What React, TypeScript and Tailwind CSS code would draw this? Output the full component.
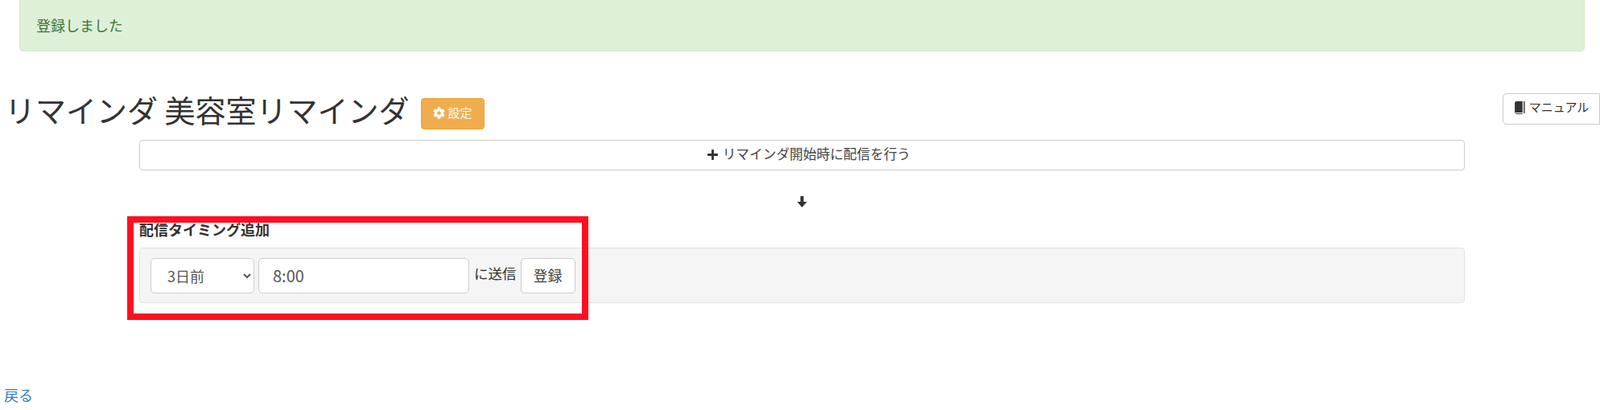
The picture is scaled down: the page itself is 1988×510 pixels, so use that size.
import { FaCog, FaPlus } from 'react-icons/fa'

const FONT = "font-['Noto_Sans_CJK_JP','Noto_Sans',sans-serif]"

const BookIcon = () => (
  <svg viewBox="0 0 14 16" className="h-[17px] w-[15px]" fill="currentColor">
    <path d="M1 3 Q1 1 3 1 H10 V14 H3 Q1 14 1 15 Z" />
    <path d="M2 15 H10 V16 H3 Q2 16 2 15 Z" />
    <path d="M11 1 H13 V15 H11 Z" opacity="0.7" />
  </svg>
)

const ArrowIcon = () => (
  <svg viewBox="0 0 13 14" className="h-[14px] w-[13px]" fill="currentColor">
    <path d="M4.5 0 H8.5 V7 H12.5 L6.5 14 L0.5 7 H4.5 Z" />
  </svg>
)

export default function App() {
  return (
    <div className={`relative h-[510px] w-[1988px] overflow-hidden bg-white text-[#333] ${FONT}`}>
      {/* alert, top edge is cut off */}
      <div className="mx-[24px] -mt-[6px] flex h-[70px] w-[1945px] items-center rounded-[5px] border border-[#d6e9c6] bg-[#dff0d8] pl-[20px] pt-[4px] text-[18px] text-[#3c763d]">
        登録しました
      </div>

      {/* title row */}
      <div className="mt-[52px] flex h-[58px] items-start justify-between pl-[6px]">
        <div className="flex items-start">
          <h1 className="-mt-[6px] text-[38px] leading-[52px] font-normal whitespace-pre">リマインダ 美容室リマインダ</h1>
          <button className="ml-[14px] mt-[6px] flex h-[39px] w-[79px] items-center justify-center gap-[4px] rounded-[4px] border border-[#eea236] bg-[#f0ad4e] pb-[2px] text-[15px] text-white">
            <FaCog className="h-[15px] w-[15px]" />
            設定
          </button>
        </div>
        <button className="flex h-[39px] w-[121px] items-center justify-center gap-[4px] rounded-l-[5px] border border-[#ccc] bg-white pb-[4px] text-[15px]">
          <BookIcon />
          マニュアル
        </button>
      </div>

      <div className="ml-[173px] w-[1647px]">
        <button className="flex h-[38px] w-full items-center justify-center gap-[5px] rounded-[4px] border border-[#ccc] bg-white pb-[2px] pl-[16px] text-[16.7px] text-[#444]">
          <FaPlus className="h-[15px] w-[15px] text-[#333]" />
          リマインダ開始時に配信を行う
        </button>

        <div className="mt-[32px] flex h-[16px] justify-center">
          <ArrowIcon />
        </div>

        <div className="mt-[12px] text-[18px] leading-[26px] font-bold">配信タイミング追加</div>

        <div className="mt-[10px] flex h-[69px] items-center gap-[5px] rounded-[4px] border border-[#e3e3e3] bg-[#f5f5f5] pl-[13px]">
          <select
            defaultValue="3"
            className="h-[44px] w-[129px] rounded-[5px] border border-[#ccc] bg-white pl-[16px] text-[18px] text-[#555]"
          >
            <option value="3">3日前</option>
          </select>
          <input
            defaultValue="8:00"
            className="h-[44px] w-[262px] rounded-[5px] border border-[#ccc] bg-white px-[17px] text-[20px] text-[#555]"
          />
          <span className="ml-[1px] pb-[4px] text-[17.5px]">に送信</span>
          <button className="h-[44px] w-[68px] rounded-[5px] border border-[#ccc] bg-white text-[18px] text-[#444]">登録</button>
        </div>
      </div>

      <a href="#" className="mt-[102px] ml-[5px] block text-[18px] leading-[24px] text-[#337ab7]">
        戻る
      </a>

      {/* red annotation frame drawn over the form */}
      <div className="absolute left-[158px] top-[269px] h-[129px] w-[573px] border-[8px] border-[#ff0f1f]" />
    </div>
  )
}
